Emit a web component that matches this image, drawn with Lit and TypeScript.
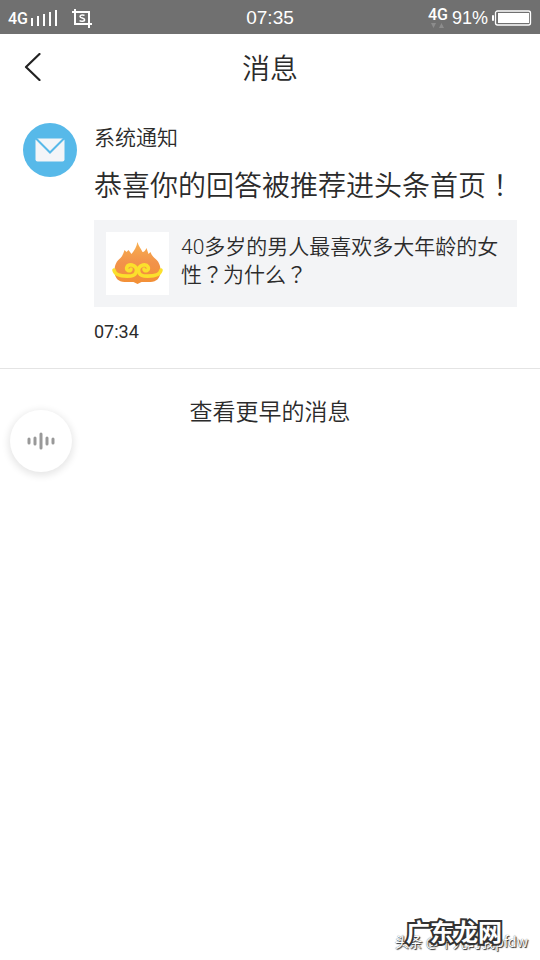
import { LitElement, html, css } from "lit";
import { customElement } from "lit/decorators.js";

@customElement("status-bar")
class StatusBar extends LitElement {
  static styles = css`
    :host {
      display: grid;
      grid-template-columns: 1fr auto 1fr;
      align-items: center;
      height: 34px;
      padding: 0 8px;
      background: #707070;
      color: #fff;
      font: 19px/34px "Liberation Sans", sans-serif;
    }
    .side {
      display: flex;
      align-items: center;
    }
    .right {
      justify-content: flex-end;
      gap: 4px;
    }
    .net {
      font: 500 16px/34px Roboto, sans-serif;
      padding-top: 2px;
    }
    .signal {
      margin: 0 14px 0 2px;
    }
    .mobile {
      display: flex;
      flex-direction: column;
      align-items: center;
      font: 500 16px/16px Roboto, sans-serif;
      padding-bottom: 2px;
    }
    .percent {
      font-size: 18px;
    }
    svg {
      display: block;
    }
  `;

  render() {
    return html`
      <div class="side">
        <span class="net">4G</span>
        <svg class="signal" width="28" height="18" viewBox="0 0 28 18" aria-hidden="true">
          <path d="M2 9v8M8 7v10M14 5v12M20 3v14M26 1v16" stroke="#fff" stroke-width="2" />
        </svg>
        <svg width="20" height="19" viewBox="0 0 20 19" fill="none" stroke="#fff" aria-hidden="true">
          <path d="M0 3h17v16M3 0v15h17" stroke-width="2" />
          <path d="M12.500 6.600C11.800 5.800 8 5.400 8 7.500c0 2 4.600 1 4.600 3.200 0 2.100-4 1.800-5 .7" stroke-width="1.500" />
        </svg>
      </div>
      <span>07:35</span>
      <div class="side right">
        <span class="mobile">4G
          <svg width="14" height="5" viewBox="0 0 14 5" fill="#8c8c8c" aria-hidden="true">
            <path d="M0 0h5L2.500 5zM8 5h5L10.500 0z" />
          </svg>
        </span>
        <span class="percent">91%</span>
        <svg width="40" height="16" viewBox="0 0 40 16" aria-hidden="true">
          <rect x="0" y="5" width="2" height="6" rx="1" fill="#fff" />
          <rect x="3.500" y="1" width="35" height="14" rx="2" fill="none" stroke="#fff" stroke-width="1.300" />
          <rect x="6" y="3" width="31" height="10" fill="#fff" />
        </svg>
      </div>
    `;
  }
}

@customElement("app-root")
class AppRoot extends LitElement {
  static styles = css`
    :host {
      display: flex;
      flex-direction: column;
      position: relative;
      min-height: 100vh;
      background: #fff;
      color: #2b2b2b;
      font-family: "Noto Sans CJK SC", sans-serif;
      font-weight: 350;
    }
    .nav {
      display: grid;
      grid-template-columns: 64px 1fr 64px;
      align-items: center;
      height: 66px;
    }
    h1,
    h2,
    p {
      margin: 0;
      font-weight: inherit;
    }
    h1 {
      font-size: 28px;
      line-height: 40px;
      text-align: center;
    }
    button {
      padding: 0;
      border: 0;
      background: none;
      color: inherit;
      font: inherit;
    }
    svg {
      display: block;
    }
    .back {
      justify-self: start;
      padding: 8px 24px;
    }
    .notice {
      display: flex;
      gap: 17px;
      padding: 20px 23px 24px;
      border-bottom: 1px solid #e4e4e4;
    }
    .avatar {
      flex: none;
      margin-top: 3px;
    }
    .body {
      flex: 1;
      min-width: 0;
    }
    .sender {
      font-size: 21px;
      line-height: 32px;
    }
    h2 {
      padding: 11px 0 15px;
      font-size: 28px;
      line-height: 42px;
      white-space: nowrap;
    }
    h2 .mid {
      font-family: "Noto Sans CJK TC", sans-serif;
    }
    .card {
      display: flex;
      gap: 12px;
      padding: 12px;
      background: #f3f4f6;
      color: inherit;
      text-decoration: none;
    }
    .thumb {
      flex: none;
      background: #fff;
    }
    .question {
      flex: 1;
      margin-right: -4px;
      padding-top: 1px;
      font-family: Roboto, "Noto Sans CJK SC", sans-serif;
      font-size: 21px;
      line-height: 28px;
    }
    .question .mid {
      font-family: Roboto, "Noto Sans CJK TC", sans-serif;
    }
    time {
      display: block;
      padding-top: 12px;
      font: 18px/25px Roboto, sans-serif;
    }
    .earlier {
      align-self: center;
      margin-top: 24px;
      font-size: 23px;
      line-height: 34px;
    }
    .voice {
      position: absolute;
      left: 10px;
      top: 410px;
      display: grid;
      place-items: center;
      width: 62px;
      height: 62px;
      border-radius: 50%;
      background: #fff;
      box-shadow: 0 2px 7px 2px #00000018;
    }
    .credit {
      position: absolute;
      right: 12px;
      bottom: 8px;
      color: #fff;
      font: 14px/22px "Noto Sans CJK SC", sans-serif;
      text-shadow: 1px 1px 1px #222, 0 0 1px #444;
    }
    .mark {
      position: absolute;
      right: 38px;
      bottom: 12px;
      color: #fff;
      font: 700 24px/34px "Noto Sans CJK SC", sans-serif;
      -webkit-text-stroke: 4px #333;
      paint-order: stroke fill;
    }
  `;

  render() {
    return html`
      <status-bar></status-bar>
      <header class="nav">
        <button class="back" aria-label="返回">
          <svg width="17" height="28" viewBox="0 0 17 28" fill="none" stroke="#222" stroke-width="2.200">
            <path d="M15.500 1L2 14l13.500 13" stroke-linecap="round" stroke-linejoin="round" />
          </svg>
        </button>
        <h1>消息</h1>
      </header>
      <article class="notice">
        <svg class="avatar" width="54" height="54" viewBox="0 0 54 54" aria-hidden="true">
          <circle cx="27" cy="27" r="27" fill="#57b9e9" />
          <rect x="12.500" y="15.500" width="29" height="23" rx="2" fill="#f3f5f8" />
          <path d="M13 15.500L27 29.500 41 15.500" fill="none" stroke="#57b9e9" stroke-width="2" />
        </svg>
        <div class="body">
          <p class="sender">系统通知</p>
          <h2>恭喜你的回答被推荐进头条首页<span class="mid">！</span></h2>
          <a class="card" href="#question">
            <svg class="thumb" width="63" height="63" viewBox="0 0 63 63" aria-hidden="true">
              <defs>
                <linearGradient id="flame" x1="0" y1="0" x2="0" y2="1">
                  <stop offset="0" stop-color="#f8b050" />
                  <stop offset="0.500" stop-color="#f2924a" />
                  <stop offset="1" stop-color="#f39035" />
                </linearGradient>
              </defs>
              <path
                fill="url(#flame)"
                d="M31.500 10c1 4 3 6 5 10 2 0 3-2 4-4l2 6 2-2c1 3 2 4 4 6 4 3 6 7 6 13 0 7-4 11-10 11-4 0-7 0-9 0l-4 2-4-2c-3 0-6 0-9 0-6 0-10-4-10-11 0-6 2-10 6-13 2-2 3-5 4-8l2 2 2-2 3 4c3-4 5-7 6-12z"
              />
              <g fill="none" stroke="#fbe02c" stroke-width="3.600" stroke-linecap="round" stroke-linejoin="round">
                <path d="M8 38c1 6 9 6.500 17 6 6-.5 8-9 1-11-5-1-7 4-4 5.500 2 .8 3-.5 3-1.500" />
                <path d="M55 38c-1 6-9 6.500-17 6-6-.5-8-9-1-11 5-1 7 4 4 5.500-2 .8-3-.5-3-1.500" />
              </g>
            </svg>
            <span class="question">40多岁的男人最喜欢多大年龄的女性<span class="mid">？</span>为什么<span class="mid">？</span></span>
          </a>
          <time>07:34</time>
        </div>
      </article>
      <button class="earlier">查看更早的消息</button>
      <button class="voice" aria-label="语音">
        <svg width="28" height="18" viewBox="0 0 28 18" stroke="#999" stroke-width="3" stroke-linecap="round">
          <path d="M2 7v4M8 6v6M14 2v14M20 6v6M26 7v4" />
        </svg>
      </button>
      <span class="credit">头条 @十九的我pfdw</span>
      <span class="mark">广东龙网</span>
    `;
  }
}
